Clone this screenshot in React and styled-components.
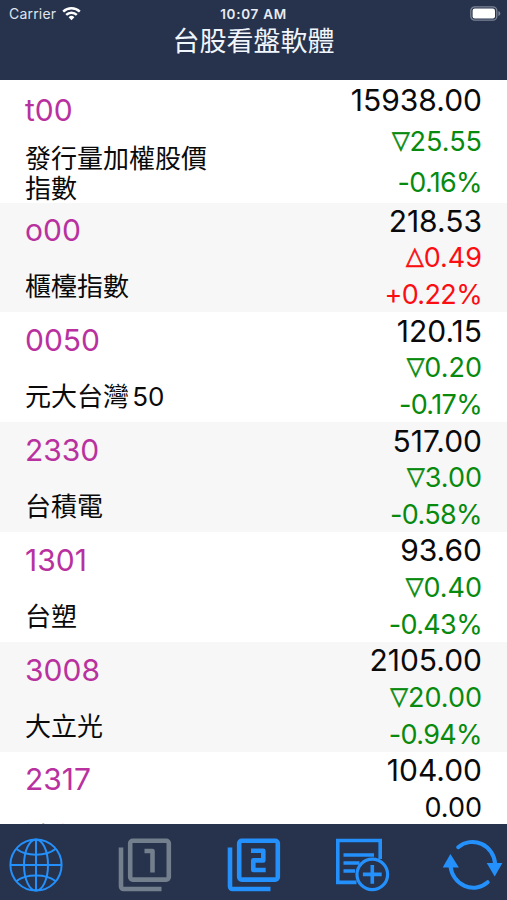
import React from 'react';
import styled, { createGlobalStyle } from 'styled-components';

const GlobalStyle = createGlobalStyle`
  * {
    box-sizing: border-box;
  }

  body {
    margin: 0;
    font-family: Inter, 'Noto Sans CJK TC', sans-serif;
    background-color: #ffffff;
  }
`;

const Screen = styled.div`
  display: flex;
  flex-direction: column;
  width: 507px;
  height: 900px;
  overflow: hidden;
`;

const Header = styled.header`
  flex: none;
  height: 79.5px;
  background-color: #27334c;
  color: #ffffff;
`;

const StatusBar = styled.div`
  display: grid;
  grid-template-columns: 1fr auto 1fr;
  align-items: center;
  height: 27px;
  padding: 0 6px 0 9px;
`;

const Carrier = styled.div`
  display: flex;
  align-items: center;
  gap: 6px;
  font-size: 14px;
  letter-spacing: 0.2px;
  color: #dfe4ee;
`;

const Clock = styled.div`
  margin-right: 3px;
  font-size: 13.5px;
  font-weight: 600;
  letter-spacing: 0.7px;
  color: #e8ecf4;
`;

const Battery = styled.svg`
  justify-self: end;
`;

const Title = styled.h1`
  margin: 0;
  font-size: 27px;
  font-weight: 400;
  line-height: 30px;
  text-align: center;
  color: #f1f6fc;
`;

const List = styled.main`
  flex: 1;
  overflow: hidden;
`;

const StyledRow = styled.div`
  display: flex;
  justify-content: space-between;
  height: ${props => props.$tall ? '123px' : '109.9px'};
  padding: 0 25px;
  background-color: ${props => props.$shaded ? '#f7f7f7' : '#ffffff'};
`;

const Stock = styled.div`
  display: grid;
  grid-template-rows: repeat(2, minmax(0, 1fr));
  align-items: center;
  width: 190px;
`;

const Code = styled.div`
  font-size: 30px;
  line-height: 36px;
  color: #b9319f;
`;

const Name = styled.div`
  padding-top: 5px;
  font-size: 26px;
  line-height: 30.5px;
  text-autospace: normal;
  color: #0a0a0a;
`;

const Quote = styled.div`
  display: grid;
  grid-template-rows: repeat(3, 1fr);
  align-items: center;
  text-align: right;
`;

const Price = styled.div`
  font-size: 30px;
  line-height: 36px;
  color: #0a0a0a;
`;

const Change = styled.div`
  display: flex;
  align-items: center;
  justify-content: flex-end;
  padding-top: 2px;
  font-size: 27px;
  line-height: 34px;
  color: ${props => props.color};
`;

const Percent = styled(Change)`
  letter-spacing: -0.65px;
`;

const Arrow = styled.span`
  font-family: 'DejaVu Sans', sans-serif;
  font-size: 23px;
  transform: translateY(-2px) scaleY(1.06);
  -webkit-text-stroke: 0.6px;
`;

const TabBar = styled.nav`
  display: flex;
  flex: none;
  align-items: center;
  gap: 55px;
  height: 76px;
  padding: 6px 0 0 9px;
  background-color: #27334c;
`;

const Tab = styled.svg`
  display: block;
  flex: none;
  overflow: visible;
  fill: none;
  stroke: ${props => props.$muted ? '#737f8c' : '#2490fb'};
`;

const COLORS = {
  down: '#078a0d',
  up: '#fb0d12',
  flat: '#0a0a0a',
};

const ARROWS = {
  down: '▽',
  up: '△',
};

const stocks = [
  { code: 't00', name: '發行量加權股價指數', price: '15938.00', trend: 'down', change: '25.55', percent: '-0.16%', tall: true },
  { code: 'o00', name: '櫃檯指數', price: '218.53', trend: 'up', change: '0.49', percent: '+0.22%' },
  { code: '0050', name: '元大台灣50', price: '120.15', trend: 'down', change: '0.20', percent: '-0.17%' },
  { code: '2330', name: '台積電', price: '517.00', trend: 'down', change: '3.00', percent: '-0.58%' },
  { code: '1301', name: '台塑', price: '93.60', trend: 'down', change: '0.40', percent: '-0.43%' },
  { code: '3008', name: '大立光', price: '2105.00', trend: 'down', change: '20.00', percent: '-0.94%' },
  { code: '2317', name: '鴻海', price: '104.00', trend: 'flat', change: '0.00' },
];

function StockRow({ stock, shaded }) {
  const { code, name, price, trend, change, percent, tall } = stock;

  return (
    <StyledRow $tall={tall} $shaded={shaded}>
      <Stock>
        <Code>{code}</Code>
        <Name>{name}</Name>
      </Stock>
      <Quote>
        <Price>{price}</Price>
        <Change color={COLORS[trend]}>
          {ARROWS[trend] && <Arrow>{ARROWS[trend]}</Arrow>}
          {change}
        </Change>
        {percent && <Percent color={COLORS[trend]}>{percent}</Percent>}
      </Quote>
    </StyledRow>
  );
}

function WifiIcon() {
  return (
    <svg width="19" height="15" viewBox="0 0 19 15" fill="none" stroke="#ffffff" strokeWidth="2.4">
      <path d="M1.2 5.6a11.8 11.8 0 0 1 16.6 0" />
      <path d="M4.2 8.9a7.5 7.5 0 0 1 10.6 0" />
      <path d="M9.5 14.2 6.6 11.2a4.1 4.1 0 0 1 5.8 0z" fill="#ffffff" stroke="none" />
    </svg>
  );
}

function GlobeIcon() {
  return (
    <Tab width="54" height="54" viewBox="0 0 54 54" strokeWidth="2">
      <circle cx="27" cy="27" r="25.6" />
      <ellipse cx="27" cy="27" rx="12" ry="25.6" />
      <path d="M27 1.4v51.2M1.4 27h51.2" />
      <path d="M7.5 11C17 18.5 37 18.5 46.5 11M7.5 43C17 35.5 37 35.5 46.5 43" />
    </Tab>
  );
}

function GroupIcon({ muted, children }) {
  return (
    <Tab $muted={muted} width="54" height="54" viewBox="0 0 54 54" strokeWidth="4.6" strokeLinejoin="round">
      <rect x="12.2" y="2.8" width="38.6" height="38.8" rx="2.5" />
      <path d="M3 9.5v39a2.5 2.5 0 0 0 2.5 2.5H43.5" />
      {children}
    </Tab>
  );
}

function AddListIcon() {
  return (
    <Tab width="54" height="54" viewBox="0 0 54 54" strokeWidth="3.6">
      <path d="M44.2 21V2.5H1.8v41.9H20.5" />
      <path d="M7.5 17h30.5M7.5 25h16M7.5 33h11.5" />
      <circle cx="36.3" cy="36.4" r="15.3" strokeWidth="3.2" />
      <path d="M36.3 27v18.8M26.9 36.4h18.8" />
    </Tab>
  );
}

function RefreshIcon() {
  return (
    <Tab width="60" height="54" viewBox="2.3 0 60 54" strokeWidth="4" strokeLinecap="round">
      <path d="M15.5 9.2A22.8 24 0 0 1 52.5 26" />
      <path d="M45 44.2A22.8 24 0 0 1 7.8 28" />
      <path d="M44 25h15.7l-7.7 13.500z" fill="#2490fb" stroke="none" />
      <path d="M0 29.5h16.2L7.7 16z" fill="#2490fb" stroke="none" />
    </Tab>
  );
}

function App() {
  return (
    <Screen>
      <GlobalStyle />
      <Header>
        <StatusBar>
          <Carrier>
            Carrier
            <WifiIcon />
          </Carrier>
          <Clock>10:07 AM</Clock>
          <Battery width="31" height="15" viewBox="0 0 31 15">
            <rect x="0.8" y="0.8" width="26" height="13.4" rx="4" fill="none" stroke="#7c8496" strokeWidth="1.3" />
            <rect x="2.6" y="2.6" width="22.4" height="9.8" rx="2.2" fill="#ffffff" />
            <path d="M28.4 5v5c1.2-.5 1.9-1.4 1.9-2.5S29.6 5.5 28.4 5z" fill="#7c8496" />
          </Battery>
        </StatusBar>
        <Title>台股看盤軟體</Title>
      </Header>
      <List>
        {stocks.map((stock, index) => (
          <StockRow key={stock.code} stock={stock} shaded={index % 2 === 1} />
        ))}
      </List>
      <TabBar>
        <GlobeIcon />
        <GroupIcon muted>
          <path d="M26.5 13h8v21.5" />
        </GroupIcon>
        <GroupIcon>
          <path d="M24 12.8h12.3v9.6h-10v9.6h12.4" />
        </GroupIcon>
        <AddListIcon />
        <RefreshIcon />
      </TabBar>
    </Screen>
  );
}

export default App;
